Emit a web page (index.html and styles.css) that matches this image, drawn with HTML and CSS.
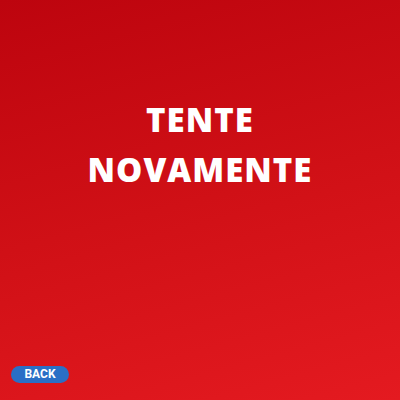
FILE: index.html
```html
<!DOCTYPE html>
<html>
<head>
<meta charset="utf-8">
<link rel="stylesheet" href="styles.css">
</head>
<body>
<main class="screen">
  <h1 class="title">TENTE<br>NOVAMENTE</h1>
  <button class="back">BACK</button>
</main>
</body>
</html>
```
FILE: styles.css
```css
html, body {
  margin: 0;
  padding: 0;
}
.screen {
  width: 400px;
  height: 400px;
  box-sizing: border-box;
  background: linear-gradient(165deg, #bd040e 0%, #d01016 50%, #e41a20 100%);
  display: flex;
  flex-direction: column;
  align-items: center;
  padding: 95px 0 17px;
}
.title {
  margin: 0;
  font-family: "Open Sans", sans-serif;
  font-weight: 800;
  font-size: 33px;
  line-height: 50px;
  color: #fff;
  text-align: center;
  letter-spacing: 1px;
}
.back {
  margin-top: auto;
  align-self: flex-start;
  margin-left: 11px;
  width: 58px;
  height: 17px;
  padding: 0;
  border: none;
  border-radius: 9px;
  background: #2a6fc6;
  color: #fff;
  font-family: Roboto, sans-serif;
  font-weight: 700;
  font-size: 12px;
  line-height: 17px;
}
```
